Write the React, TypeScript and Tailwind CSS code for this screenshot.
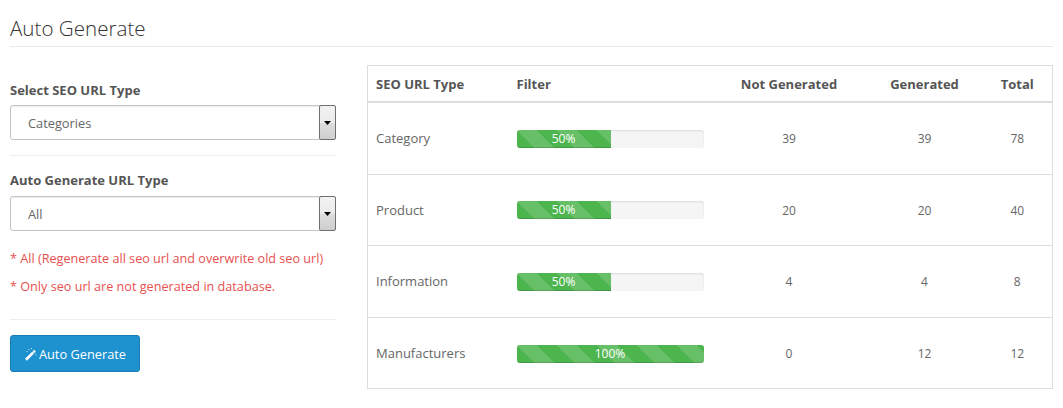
import React from 'react';

const rows = [
  { name: 'Category', pct: 50, notGen: 39, gen: 39, total: 78, h: 'h-[73px]', barPad: 'pt-[2px]' },
  { name: 'Product', pct: 50, notGen: 20, gen: 20, total: 40, h: 'h-[71px]', barPad: 'pt-0' },
  { name: 'Information', pct: 50, notGen: 4, gen: 4, total: 8, h: 'h-[72px]', barPad: 'pt-0' },
  { name: 'Manufacturers', pct: 100, notGen: 0, gen: 12, total: 12, h: 'h-[71px]', barPad: 'pt-[2px]' },
];

const FakeSelect = ({ value }: { value: string }) => (
  <div className="flex h-[35px] w-[326px] items-stretch rounded-[3px] border border-[#c4c4c4] bg-white shadow-[inset_0_1px_1px_rgba(0,0,0,0.075)]">
    <span className="flex-1 pl-[17px] text-[12.8px] leading-[35px] text-[#666]">{value}</span>
    <span className="-my-px -mr-px flex w-[17px] items-center justify-center rounded-[2px] border border-[#707070] bg-[linear-gradient(#f2f2f2_0%,#ebebeb_50%,#dddddd_51%,#cfcfcf_100%)]">
      <svg width="7" height="4" viewBox="0 0 7 4">
        <path d="M0 0h7L3.5 4z" fill="#000" />
      </svg>
    </span>
  </div>
);

const WandIcon = () => (
  <svg width="13" height="13" viewBox="0 0 13 13" fill="#fff">
    <path d="M8.4 3.4l1.9 1.9-7.4 7.4L1 10.8z" />
    <path d="M10 1.8l1.9 1.9-1.2 1.2-1.9-1.9z" />
    <path d="M4.5 1h1v1h-1zM2.5 3h1v1h-1zM7 0h1v1H7zM11.5 6.5h1v1h-1z" opacity="0.75" />
  </svg>
);

const Progress = ({ pct }: { pct: number }) => (
  <div className="h-[18px] w-[187px] overflow-hidden rounded-[3px] bg-[#f5f5f5] shadow-[inset_0_1px_2px_rgba(0,0,0,0.1)]">
    <div
      className="h-full bg-[#4cb54e] bg-[linear-gradient(45deg,rgba(255,255,255,0.15)_25%,transparent_25%,transparent_50%,rgba(255,255,255,0.15)_50%,rgba(255,255,255,0.15)_75%,transparent_75%,transparent)] bg-[length:40px_40px] text-center text-[12px] leading-[18px] text-white shadow-[inset_0_-1px_0_rgba(0,0,0,0.15)]"
      style={{ width: `${Math.ceil((187 * pct) / 100)}px` }}
    >
      {pct}%
    </div>
  </div>
);

export default function App() {
  return (
    <div className="h-[408px] w-[1063px] overflow-hidden bg-white px-[10px] font-['Open_Sans',sans-serif] text-[13px] text-[#555]">
      <div className="h-[47px] border-b border-[#e8e8e8] pt-[13px]">
        <h1 className="text-[20.6px] leading-[30px] font-light text-[#333]">Auto Generate</h1>
      </div>

      <div className="flex">
        <div className="w-[327px] pt-[34px]">
          <label className="block text-[13px] leading-[18px] font-bold text-[#555]">Select SEO URL Type</label>
          <div className="mt-[6px]">
            <FakeSelect value="Categories" />
          </div>
          <div className="mt-[15px] border-t border-[#eeeeee]" />
          <label className="mt-[15px] block text-[13px] leading-[18px] font-bold text-[#555]">Auto Generate URL Type</label>
          <div className="mt-[7px]">
            <FakeSelect value="All" />
          </div>
          <p className="mt-[17px] text-[12.65px] leading-[20px] text-[#e8504f]">* All (Regenerate all seo url and overwrite old seo url)</p>
          <p className="mt-[8px] text-[12.65px] leading-[20px] text-[#e8504f]">* Only seo url are not generated in database.</p>
          <div className="mt-[23px] border-t border-[#eeeeee]" />
          <button className="mt-[15px] flex h-[37px] w-[130px] items-center justify-center gap-[2px] rounded-[3px] border border-[#1a7cb5] bg-[#1e91cf] pt-[2px] text-[12.8px] text-white">
            <WandIcon />
            Auto Generate
          </button>
        </div>

        <div className="mt-[18px] ml-[31px]">
          <table className="w-[685px] table-fixed border-collapse border border-[#dddddd]">
            <colgroup>
              <col className="w-[141px]" />
              <col className="w-[203px]" />
              <col className="w-[155px]" />
              <col className="w-[116px]" />
              <col className="w-[70px]" />
            </colgroup>
            <thead>
              <tr className="h-[36px] border-b-2 border-[#dddddd] font-bold">
                <th className="px-2 pt-[3px] text-left font-bold">SEO URL Type</th>
                <th className="px-2 pt-[3px] text-left font-bold">Filter</th>
                <th className="px-2 pt-[3px] text-center font-bold">Not Generated</th>
                <th className="px-2 pt-[3px] text-center font-bold">Generated</th>
                <th className="px-2 pt-[3px] text-center font-bold">Total</th>
              </tr>
            </thead>
            <tbody>
              {rows.map((r) => (
                <tr key={r.name} className={`${r.h} border-b border-[#dddddd]`}>
                  <td className="px-2 pt-px text-[#666]">{r.name}</td>
                  <td className={`px-2 ${r.barPad}`}>
                    <Progress pct={r.pct} />
                  </td>
                  <td className="px-2 pt-px text-center text-[12px] text-[#666]">{r.notGen}</td>
                  <td className="px-2 pt-px text-center text-[12px] text-[#666]">{r.gen}</td>
                  <td className="px-2 pt-px text-center text-[12px] text-[#666]">{r.total}</td>
                </tr>
              ))}
            </tbody>
          </table>
        </div>
      </div>
    </div>
  );
}
